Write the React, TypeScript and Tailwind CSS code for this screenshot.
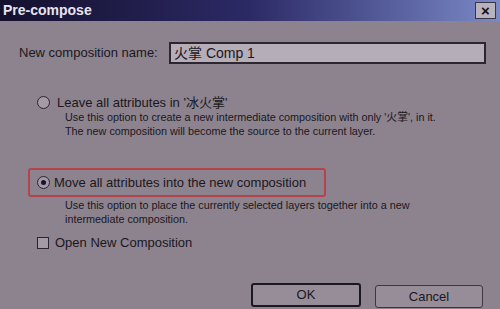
import React from 'react';

const font = { fontFamily: '"Liberation Sans", "Noto Sans CJK SC", sans-serif' };

function Radio({ checked }: { checked?: boolean }) {
  return (
    <span className="flex h-[13px] w-[13px] shrink-0 items-center justify-center rounded-full border-[1.5px] border-[#2a2430] bg-[#a49aa6]">
      {checked && <span className="h-[5px] w-[5px] rounded-full bg-[#161430]" />}
    </span>
  );
}

export default function App() {
  return (
    <div className="flex h-[309px] w-[500px] flex-col overflow-hidden bg-[#8d838e] text-[#1b1720]" style={font}>
      <div className="flex h-[21px] shrink-0 items-center justify-between bg-gradient-to-r from-[#14102e] via-[#2c2a66] to-[#7c8ac8] pl-[3px] pr-[4px]">
        <span className="text-[14px] font-bold text-[#e8e4ee]">Pre-compose</span>
        <span className="flex h-[17px] w-[21px] items-center justify-center border border-[#3a3448] bg-[#b8b2bc] text-[15px] font-bold leading-none text-[#141018]">
          ×
        </span>
      </div>

      <div className="flex items-center pl-[19px] pr-[14px] pt-[21px]">
        <span className="w-[150px] text-[13px]">New composition name:</span>
        <div className="flex h-[22px] flex-1 items-center border-2 border-[#2c2630] bg-[#b5adb8] pl-[3px] text-[14px]">
          火掌 Comp 1
        </div>
      </div>

      <div className="pl-[37px] pt-[31px]">
        <div className="flex h-[15px] items-center gap-[7px] text-[13px]">
          <Radio />
          <span>Leave all attributes in '冰火掌'</span>
        </div>
        <div className="pl-[28px] text-[10.8px] leading-[14px]">
          <div>Use this option to create a new intermediate composition with only '火掌', in it.</div>
          <div>The new composition will become the source to the current layer.</div>
        </div>
      </div>

      <div className="pl-[28px] pt-[30px]">
        <div className="flex h-[29px] w-[298px] items-center gap-[4px] rounded-[3px] border-2 border-[#b4444c] pl-[7px] text-[13px]">
          <Radio checked />
          <span>Move all attributes into the new composition</span>
        </div>
        <div className="pl-[37px] pt-[1px] text-[10.8px] leading-[14px]">
          <div>Use this option to place the currently selected layers together into a new</div>
          <div>intermediate composition.</div>
        </div>
      </div>

      <div className="mt-[9px] flex h-[15px] items-center gap-[6px] pl-[37px] text-[13px]">
        <span className="h-[12px] w-[12px] shrink-0 border-[1.5px] border-[#2a2430] bg-[#a49aa6]" />
        <span>Open New Composition</span>
      </div>

      <div className="flex items-start justify-end gap-[14px] pr-[17px] pt-[33px]">
        <button className="h-[24px] w-[110px] rounded-[3px] border-2 border-[#1c1820] bg-[#978d98] text-[13px]">OK</button>
        <button className="mt-[2px] h-[23px] w-[108px] rounded-[3px] border border-[#3c3640] bg-[#978d98] text-[13px]">Cancel</button>
      </div>
    </div>
  );
}
